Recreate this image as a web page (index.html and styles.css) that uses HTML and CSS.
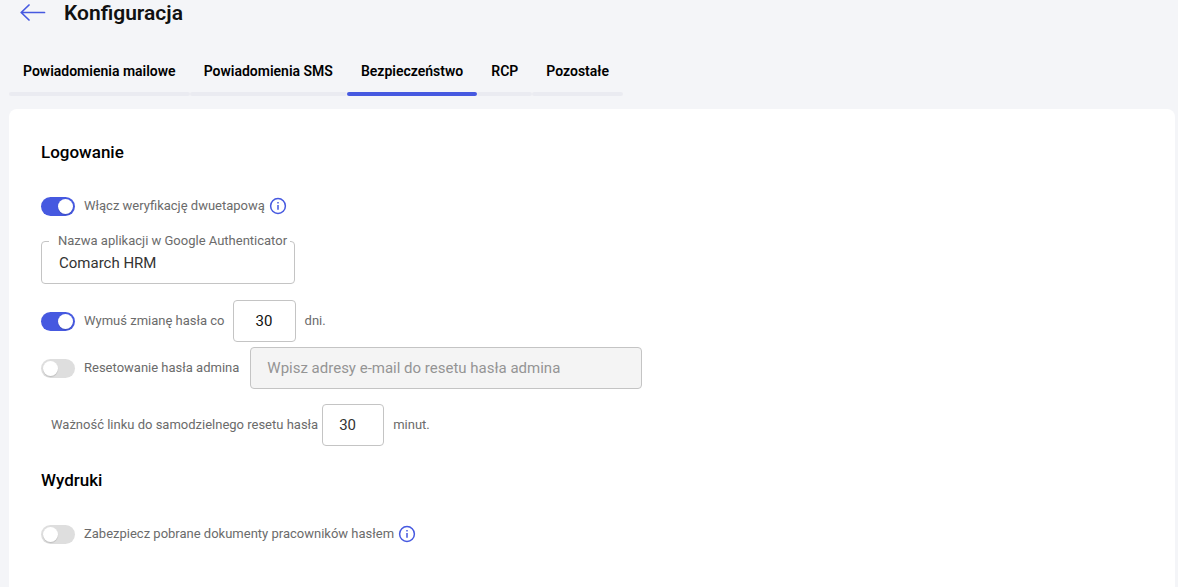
FILE: index.html
```html
<!DOCTYPE html>
<html lang="pl">
<head>
<meta charset="utf-8">
<title>Konfiguracja</title>
<link rel="stylesheet" href="styles.css">
</head>
<body>
<header class="page-header">
  <button class="back" type="button" aria-label="Wstecz">
    <svg width="26" height="18" viewBox="0 0 26 18" fill="none" stroke="currentColor" stroke-width="1.7" stroke-linecap="round" stroke-linejoin="round"><path d="M24.5 8.5H1.5M9 1 1.2 8.5 9 16"/></svg>
  </button>
  <h1 class="title">Konfiguracja</h1>
</header>
<nav class="tabs">
  <a class="tab" href="#mail">Powiadomienia mailowe</a>
  <a class="tab" href="#sms">Powiadomienia SMS</a>
  <a class="tab tab-active" href="#security" aria-current="page">Bezpieczeństwo</a>
  <a class="tab" href="#rcp">RCP</a>
  <a class="tab" href="#other">Pozostałe</a>
</nav>
<main class="card">
  <section class="section">
    <h2 class="section-title">Logowanie</h2>
    <div class="row">
      <input class="switch" type="checkbox" id="two-step" checked>
      <label class="label" for="two-step">Włącz weryfikację dwuetapową</label>
      <button class="info" type="button" aria-label="Informacja">
        <svg width="18" height="18" viewBox="0 0 18 18" fill="none" stroke="currentColor" stroke-width="1.5"><circle cx="9" cy="9" r="7.4"/><path d="M9 8v4.8M9 5v1.6"/></svg>
      </button>
    </div>
    <fieldset class="outlined">
      <legend class="legend"><label for="app-name">Nazwa aplikacji w Google Authenticator</label></legend>
      <input class="outlined-input" type="text" id="app-name" value="Comarch HRM">
    </fieldset>
    <div class="row">
      <input class="switch" type="checkbox" id="force-change" checked>
      <label class="label" for="force-change">Wymuś zmianę hasła co</label>
      <input class="field field-days" type="text" aria-label="Liczba dni" value="30">
      <span class="label">dni.</span>
    </div>
    <div class="row row-admin">
      <input class="switch" type="checkbox" id="admin-reset">
      <label class="label" for="admin-reset">Resetowanie hasła admina</label>
      <input class="field field-mail" type="text" aria-label="Adresy e-mail" placeholder="Wpisz adresy e-mail do resetu hasła admina" disabled>
    </div>
    <div class="row row-link">
      <label class="label" for="link-time">Ważność linku do samodzielnego resetu hasła</label>
      <input class="field field-minutes" type="text" id="link-time" value="30">
      <span class="label">minut.</span>
    </div>
  </section>
  <section class="section">
    <h2 class="section-title">Wydruki</h2>
    <div class="row">
      <input class="switch" type="checkbox" id="protect">
      <label class="label" for="protect">Zabezpiecz pobrane dokumenty pracowników hasłem</label>
      <button class="info" type="button" aria-label="Informacja">
        <svg width="18" height="18" viewBox="0 0 18 18" fill="none" stroke="currentColor" stroke-width="1.5"><circle cx="9" cy="9" r="7.4"/><path d="M9 8v4.8M9 5v1.6"/></svg>
      </button>
    </div>
  </section>
</main>
</body>
</html>
```
FILE: styles.css
```css
* {
  box-sizing: border-box;
}

body {
  margin: 0;
  min-height: 100vh;
  display: flex;
  flex-direction: column;
  background: #f4f5f8;
  color: #111;
  font-family: Roboto, "Liberation Sans", sans-serif;
  font-size: 13px;
}

input,
button {
  margin: 0;
  font-family: inherit;
}

.page-header {
  display: flex;
  align-items: center;
  gap: 18px;
  padding-left: 20px;
}

.back,
.info {
  display: flex;
  padding: 0;
  border: 0;
  background: none;
  color: #4659e0;
  cursor: pointer;
}

.title {
  margin: 0;
  font-size: 21px;
  line-height: 26px;
  font-weight: 600;
}

.tabs {
  display: flex;
  margin-top: 35px;
  padding-left: 9px;
}

.tab {
  display: flex;
  flex-direction: column;
  gap: 11px;
  padding: 0 14px;
  color: #000;
  font-size: 14px;
  line-height: 20px;
  font-weight: 600;
  text-decoration: none;
}

.tab::after {
  content: "";
  margin: 0 -14px;
  height: 4px;
  border-radius: 2px;
  background: #eaebf1;
}

.tab-active::after {
  background: #4659e0;
}

.card {
  flex: 1;
  margin: 13px 3px 0 9px;
  padding: 33px 32px 40px;
  border-radius: 8px 8px 0 0;
  background: #fff;
}

.section + .section {
  margin-top: 24px;
}

.section-title {
  margin: 0 0 32px;
  color: #000;
  font-size: 17px;
  line-height: 20px;
  font-weight: 500;
}

.row {
  display: flex;
  align-items: center;
  min-height: 24px;
}

.label {
  color: #6b6b6b;
  line-height: 20px;
}

.switch {
  appearance: none;
  display: flex;
  align-items: center;
  width: 34px;
  height: 19px;
  margin-right: 9px;
  padding: 2px;
  border-radius: 10px;
  background: #dedede;
}

.switch::before {
  content: "";
  width: 15px;
  height: 15px;
  border-radius: 50%;
  background: #fff;
  box-shadow: 0 1px 1px rgba(0, 0, 0, 0.15);
}

.switch:checked {
  justify-content: flex-end;
  background: #4659e0;
}

.info {
  margin-left: 4px;
}

.outlined {
  width: 252px;
  max-width: 100%;
  margin: 15px 0 16px;
  padding: 0 4px 0 7px;
  border: 1px solid #c4c4c4;
  border-radius: 4px;
}

.legend {
  padding: 0 3px 0 9px;
  color: #6b6b6b;
  line-height: 16px;
  white-space: nowrap;
}

.outlined-input {
  display: block;
  width: 100%;
  height: 34px;
  padding: 0 10px 6px;
  border: 0;
  outline: 0;
  background: none;
  color: #333;
  font-size: 15px;
}

.field {
  height: 42px;
  padding: 0 16px;
  border: 1px solid #c4c4c4;
  border-radius: 4px;
  background: #fff;
  color: #333;
  font-size: 15px;
}

.field:disabled {
  background: #f4f4f4;
}

.field::placeholder {
  color: #949494;
}

.field-days {
  width: 63px;
  margin: 0 9px 0 8px;
  color: #111;
  text-align: center;
}

.row-admin {
  margin-top: 5px;
}

.field-mail {
  flex: 0 1 392px;
  margin-left: 11px;
}

.row-link {
  margin-top: 15px;
  padding-left: 10px;
}

.field-minutes {
  width: 62px;
  margin: 0 9px 0 4px;
}
```
